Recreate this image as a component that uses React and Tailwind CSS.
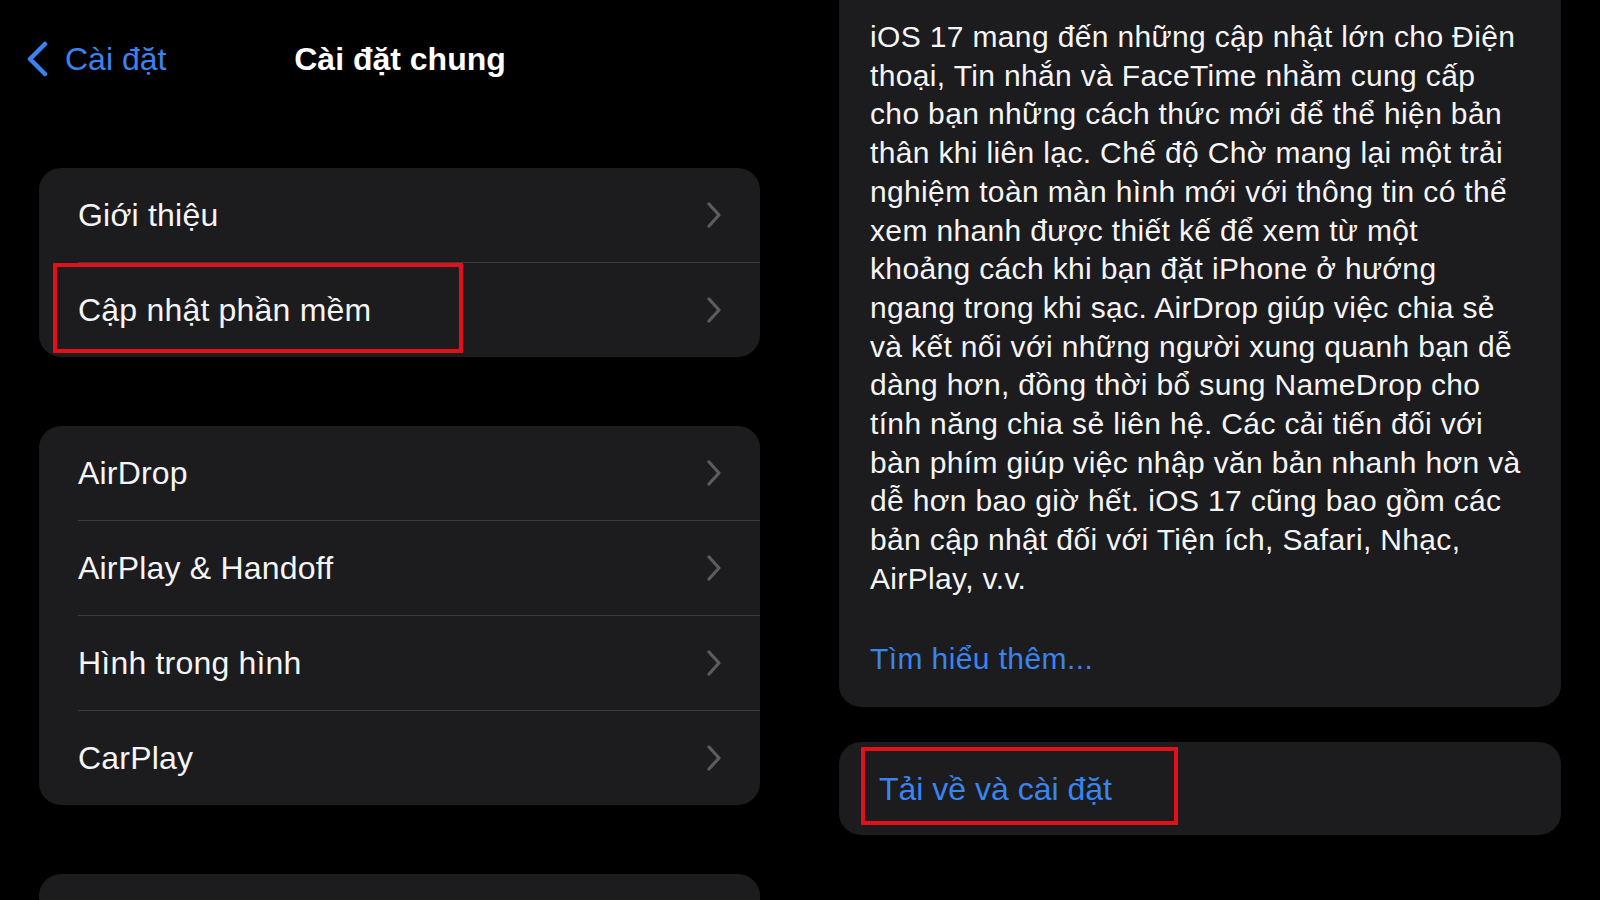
import React from "react";

const lines = [
  "iOS 17 mang đến những cập nhật lớn cho Điện",
  "thoại, Tin nhắn và FaceTime nhằm cung cấp",
  "cho bạn những cách thức mới để thể hiện bản",
  "thân khi liên lạc. Chế độ Chờ mang lại một trải",
  "nghiệm toàn màn hình mới với thông tin có thể",
  "xem nhanh được thiết kế để xem từ một",
  "khoảng cách khi bạn đặt iPhone ở hướng",
  "ngang trong khi sạc. AirDrop giúp việc chia sẻ",
  "và kết nối với những người xung quanh bạn dễ",
  "dàng hơn, đồng thời bổ sung NameDrop cho",
  "tính năng chia sẻ liên hệ. Các cải tiến đối với",
  "bàn phím giúp việc nhập văn bản nhanh hơn và",
  "dễ hơn bao giờ hết. iOS 17 cũng bao gồm các",
  "bản cập nhật đối với Tiện ích, Safari, Nhạc,",
  "AirPlay, v.v.",
];

const Chevron = () => (
  <svg width="16" height="26" viewBox="0 0 16 26" fill="none">
    <polyline
      points="3,2 13,13 3,24"
      stroke="#5c5c60"
      strokeWidth="3.2"
      strokeLinecap="round"
      strokeLinejoin="round"
    />
  </svg>
);

const Row = ({ label, first, boxed }) => (
  <div className="flex flex-col">
    {!first && <div className="ml-[39px] h-px bg-[#3a3a3c]" />}
    <div className="relative flex h-[94px] items-center justify-between pl-[39px] pr-[38px]">
      <span className="text-[32px] tracking-[0.2px] text-[#f5f5f7]">{label}</span>
      <Chevron />
      {boxed && (
        <div className="absolute left-[14px] top-0 h-[90px] w-[410px] border-4 border-[#e3101b]" />
      )}
    </div>
  </div>
);

const Group = ({ items, boxedIndex }) => (
  <div className="overflow-hidden rounded-[22px] bg-[#1c1c1e]">
    {items.map((item, i) => (
      <Row key={item} label={item} first={i === 0} boxed={i === boxedIndex} />
    ))}
  </div>
);

export default function App() {
  return (
    <div className="flex h-[900px] w-[1600px] overflow-hidden bg-black font-['Liberation_Sans',Arial,sans-serif] leading-none">
      {/* left: settings list */}
      <div className="flex w-[800px] shrink-0 flex-col">
        <div className="grid h-[118px] shrink-0 grid-cols-[1fr_auto_1fr] items-center">
          <div className="flex items-center gap-[16px] pl-[26px]">
            <svg width="23" height="36" viewBox="0 0 23 36" fill="none">
              <polyline
                points="19,3 4,18 19,33"
                stroke="#3a84f0"
                strokeWidth="4.5"
                strokeLinecap="round"
                strokeLinejoin="round"
              />
            </svg>
            <span className="text-[32px] text-[#3a84f0]">Cài đặt</span>
          </div>
          <h1 className="text-[32px] font-bold text-white">Cài đặt chung</h1>
          <div />
        </div>

        <div className="mt-[50px] flex w-[760px] shrink-0 flex-col gap-[69px] pl-[39px]">
          <Group items={["Giới thiệu", "Cập nhật phần mềm"]} boxedIndex={1} />
          <Group items={["AirDrop", "AirPlay & Handoff", "Hình trong hình", "CarPlay"]} />
          <div className="h-[120px] rounded-[22px] bg-[#1c1c1e]" />
        </div>
      </div>

      {/* right: update notes */}
      <div className="ml-[39px] flex w-[722px] shrink-0 flex-col gap-[35px]">
        <div className="rounded-b-[22px] bg-[#1c1c1e] pb-[29px] pl-[31px] pt-[18px]">
          <div className="text-[30px] leading-[38.7px] tracking-[0.35px] text-[#f5f5f7]">
            {lines.map((l) => (
              <div key={l} className="whitespace-nowrap">
                {l}
              </div>
            ))}
          </div>
          <div className="mt-[41px] text-[30px] leading-[38.7px] tracking-[0.4px] text-[#3a84f0]">
            Tìm hiểu thêm...
          </div>
        </div>

        <div className="relative flex h-[93px] items-center rounded-[22px] bg-[#1c1c1e] pl-[40px]">
          <span className="text-[32px] text-[#3a84f0]">Tải về và cài đặt</span>
          <div className="absolute left-[22px] top-[5px] h-[78px] w-[317px] border-4 border-[#e3101b]" />
        </div>
      </div>
    </div>
  );
}
